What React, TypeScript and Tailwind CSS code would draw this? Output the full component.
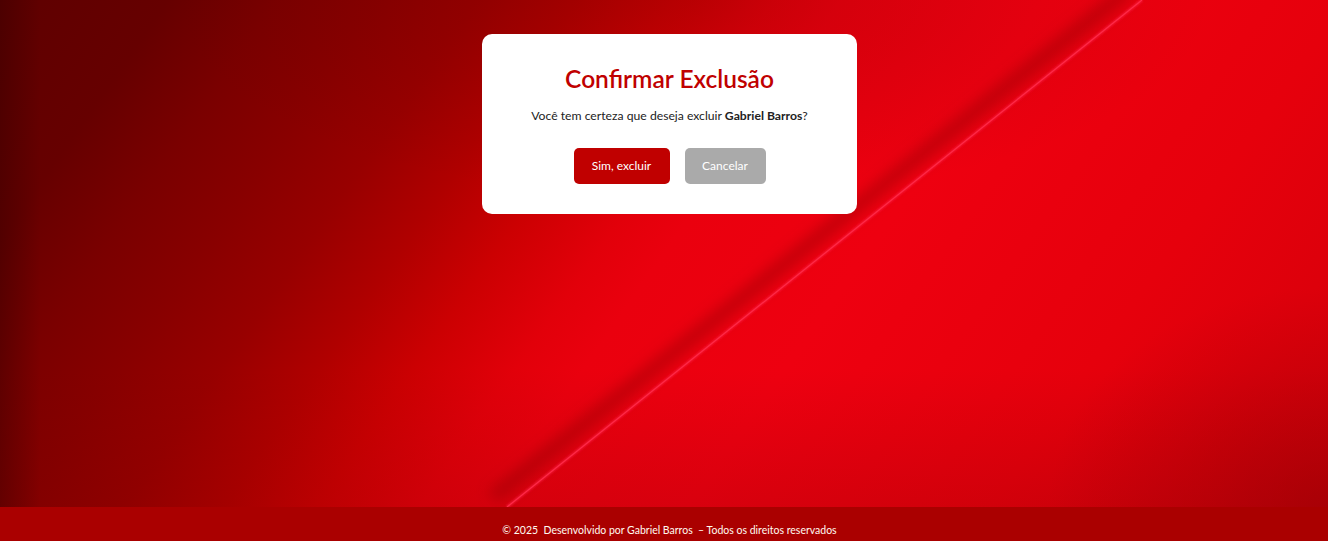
import React from "react";

export default function App() {
  return (
    <div className="relative flex h-[541px] w-[1328px] flex-col overflow-hidden font-['Lato',sans-serif]">
      <main className="relative flex-1 bg-[linear-gradient(to_right,rgba(30,0,0,0.28)_0px,rgba(30,0,0,0)_40px),radial-gradient(ellipse_280px_220px_at_100%_100%,rgba(120,0,0,0.35),rgba(120,0,0,0)),radial-gradient(ellipse_520px_200px_at_52%_0%,rgba(90,0,0,0.2),rgba(90,0,0,0)),linear-gradient(to_bottom,rgba(90,0,0,0)_0px,rgba(90,0,0,0)_370px,rgba(90,0,0,0.15)_507px),linear-gradient(125deg,#5e0000_0%,#660000_10%,#7a0000_16.5%,#880000_22.4%,#980000_28.4%,#b00000_34.3%,#cc0002_40%,#e2000a_46%,#ea000e_50%,#ee0010_62%,#e6000c_80%,#d4000a_100%)]">
        <svg
          className="pointer-events-none absolute inset-0"
          width="1328"
          height="507"
          viewBox="0 0 1328 507"
        >
          <defs>
            <filter id="shadowBlur" x="-20%" y="-20%" width="140%" height="140%">
              <feGaussianBlur stdDeviation="7" />
            </filter>
            <filter id="glow" x="-20%" y="-20%" width="140%" height="140%">
              <feGaussianBlur stdDeviation="0.8" />
            </filter>
          </defs>
          <line x1="1128" y1="-10" x2="493" y2="497" stroke="rgba(130,0,0,0.4)" strokeWidth="14" filter="url(#shadowBlur)" />
          <line x1="1142" y1="0" x2="507" y2="507" stroke="rgba(255,40,80,0.55)" strokeWidth="3" filter="url(#glow)" />
          <line x1="1142" y1="0" x2="507" y2="507" stroke="#ff2a48" strokeWidth="1.2" />
        </svg>
        <div className="relative flex justify-center pl-[11px] pt-[34px]">
          <div className="flex w-[375px] flex-col items-center rounded-[10px] bg-white px-[20px] pb-[30px] pt-[30px]">
            <h1 className="whitespace-nowrap text-[24.5px] font-semibold leading-[30px] text-[#c00000]">Confirmar Exclusão</h1>
            <p className="mt-[13px] whitespace-nowrap text-[12.2px] leading-[18px] text-[#222]">
              Você tem certeza que deseja excluir <strong className="font-bold">Gabriel Barros</strong>?
            </p>
            <div className="mt-[23px] flex gap-[15px]">
              <button className="h-[36px] w-[96px] rounded-[5px] bg-[#c00000] text-[12px] text-white">Sim, excluir</button>
              <button className="h-[36px] w-[81px] rounded-[5px] bg-[#aaaaaa] text-[12px] text-white">Cancelar</button>
            </div>
          </div>
        </div>
      </main>
      <footer className="flex h-[34px] items-center justify-center bg-[#aa0000] pl-[11px] pt-[14px] text-[10.5px] text-[#fffaf0]">
        <span className="whitespace-pre">© 2025  Desenvolvido por Gabriel Barros  – Todos os direitos reservados</span>
      </footer>
    </div>
  );
}
